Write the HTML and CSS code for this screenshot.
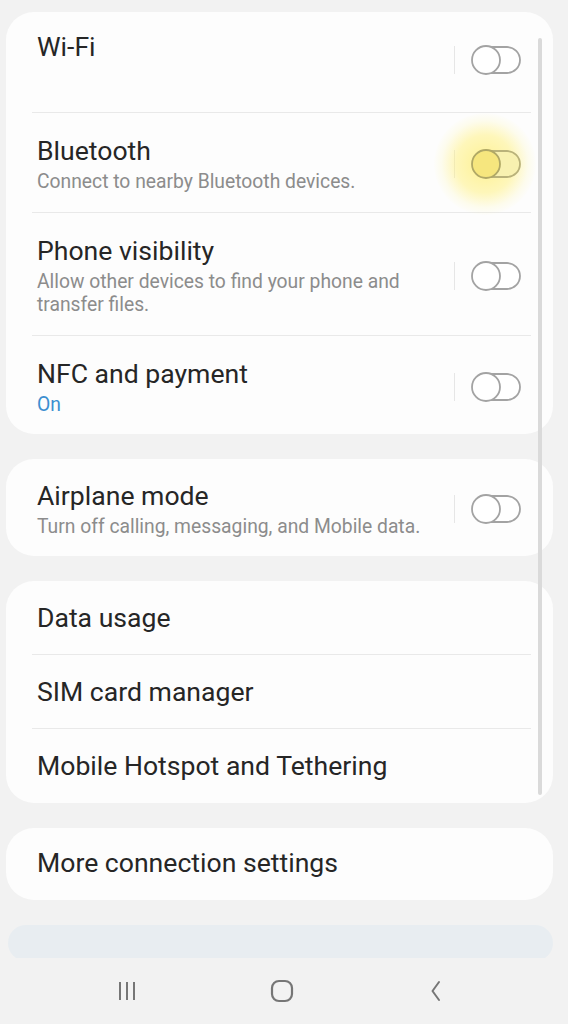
FILE: index.html
```html
<!DOCTYPE html>
<html lang="en">
<head>
    <meta charset="UTF-8">
    <meta name="viewport" content="width=device-width, initial-scale=1.0">
    <title>Connections</title>
    <link rel="stylesheet" href="styles.css">
</head>
<body>
    <div class="screen">
        <div class="list">
            <div class="card">
                <div class="row first">
                    <div class="text">
                        <div class="title">Wi-Fi</div>
                        <div class="sub"></div>
                    </div>
                    <div class="switch-wrap">
                        <span class="sep"></span>
                        <svg class="switch" width="52" height="32" viewBox="0 0 52 32"><rect x="3" y="3" width="47" height="26" rx="13" fill="#fff" stroke="#a3a3a3" stroke-width="1.8"/><circle cx="16" cy="16" r="14" fill="#fff" stroke="#a3a3a3" stroke-width="1.8"/></svg>
                    </div>
                </div>
                <div class="row">
                    <div class="text">
                        <div class="title">Bluetooth</div>
                        <div class="sub">Connect to nearby Bluetooth devices.</div>
                    </div>
                    <div class="switch-wrap">
                        <span class="touch"></span>
                        <span class="sep"></span>
                        <svg class="switch" width="52" height="32" viewBox="0 0 52 32"><rect x="3" y="3" width="47" height="26" rx="13" fill="#f8f1b0" stroke="#b9b27a" stroke-width="1.8"/><circle cx="16" cy="16" r="14" fill="#f6e67e" stroke="#b0a866" stroke-width="1.8"/></svg>
                    </div>
                </div>
                <div class="row">
                    <div class="text">
                        <div class="title">Phone visibility</div>
                        <div class="sub">Allow other devices to find your phone and transfer files.</div>
                    </div>
                    <div class="switch-wrap">
                        <span class="sep"></span>
                        <svg class="switch" width="52" height="32" viewBox="0 0 52 32"><rect x="3" y="3" width="47" height="26" rx="13" fill="#fff" stroke="#a3a3a3" stroke-width="1.8"/><circle cx="16" cy="16" r="14" fill="#fff" stroke="#a3a3a3" stroke-width="1.8"/></svg>
                    </div>
                </div>
                <div class="row end">
                    <div class="text">
                        <div class="title">NFC and payment</div>
                        <div class="sub on">On</div>
                    </div>
                    <div class="switch-wrap">
                        <span class="sep"></span>
                        <svg class="switch" width="52" height="32" viewBox="0 0 52 32"><rect x="3" y="3" width="47" height="26" rx="13" fill="#fff" stroke="#a3a3a3" stroke-width="1.8"/><circle cx="16" cy="16" r="14" fill="#fff" stroke="#a3a3a3" stroke-width="1.8"/></svg>
                    </div>
                </div>
            </div>

            <div class="card">
                <div class="row solo">
                    <div class="text">
                        <div class="title">Airplane mode</div>
                        <div class="sub">Turn off calling, messaging, and Mobile data.</div>
                    </div>
                    <div class="switch-wrap">
                        <span class="sep"></span>
                        <svg class="switch" width="52" height="32" viewBox="0 0 52 32"><rect x="3" y="3" width="47" height="26" rx="13" fill="#fff" stroke="#a3a3a3" stroke-width="1.8"/><circle cx="16" cy="16" r="14" fill="#fff" stroke="#a3a3a3" stroke-width="1.8"/></svg>
                    </div>
                </div>
            </div>

            <div class="card">
                <div class="row single"><div class="title">Data usage</div></div>
                <div class="row single"><div class="title">SIM card manager</div></div>
                <div class="row single"><div class="title">Mobile Hotspot and Tethering</div></div>
            </div>

            <div class="card">
                <div class="row single last"><div class="title">More connection settings</div></div>
            </div>

            <div class="card peek"></div>
        </div>

        <div class="navbar">
            <svg width="24" height="24" viewBox="0 0 24 24"><path d="M5 3v18M12 3v18M19 3v18" stroke="#767676" stroke-width="2" fill="none"/></svg>
            <svg width="26" height="26" viewBox="0 0 26 26"><rect x="3" y="3" width="20" height="20" rx="7" stroke="#767676" stroke-width="2.2" fill="none"/></svg>
            <svg width="24" height="24" viewBox="0 0 24 24"><path d="M15 3L8.5 12l6.5 9" stroke="#767676" stroke-width="2" fill="none" stroke-linecap="round" stroke-linejoin="round"/></svg>
        </div>

        <div class="scrollbar"></div>
    </div>
</body>
</html>
```

FILE: styles.css
```css
body{
    margin: 0;
    background: #f2f2f2;
    font-family: Roboto, "Noto Sans", sans-serif;
    color: #252525;
}
.screen{
    position: relative;
    height: 1024px;
    overflow: hidden;
}
.list{
    display: flex;
    flex-direction: column;
    gap: 25px;
    padding: 12px 15px 0 6px;
}
.card{
    background: #fdfdfd;
    border-radius: 28px;
}
.row{
    display: flex;
    align-items: center;
    margin: 0 22px 0 26px;
    padding: 22px 11px 19px 5px;
    border-top: 1px solid #e9e9e9;
}
.row:first-child{
    border-top: none;
}
.row.first{
    padding-top: 19px;
    padding-bottom: 23px;
}
.row.end{
    padding-bottom: 18px;
}
.row.solo{
    padding-top: 21px;
    padding-bottom: 18px;
}
.row.single{
    padding-top: 21px;
    padding-bottom: 20px;
}
.row.single:last-child{
    padding-bottom: 21px;
}
.row.last{
    padding-top: 19px;
    padding-bottom: 19px;
}
.text{
    flex: 1;
}
.title{
    font-size: 26.6px;
    line-height: 32px;
    color: #262626;
}
.sub{
    font-size: 19.3px;
    line-height: 23px;
    color: #8c8c8c;
    padding-top: 3px;
    padding-right: 30px;
    min-height: 23px;
}
.sub.on{
    color: #3b8fd0;
}
.switch-wrap{
    position: relative;
    display: flex;
    align-items: center;
    gap: 15px;
}
.sep{
    width: 1px;
    height: 28px;
    background: #e6e6e6;
}
.switch{
    display: block;
    position: relative;
    margin-right: -2px;
}
.touch{
    position: absolute;
    left: -20px;
    top: -35px;
    width: 102px;
    height: 102px;
    border-radius: 50%;
    background: radial-gradient(circle, rgba(255, 236, 100, 0.7) 0%, rgba(255, 240, 120, 0.5) 40%, rgba(255, 246, 170, 0.2) 60%, rgba(255, 248, 190, 0) 72%);
}
.card.peek{
    height: 36px;
    margin-left: 2px;
    background: #e8edf1;
    border-radius: 20px;
}
.navbar{
    position: absolute;
    left: 0;
    right: 0;
    bottom: 0;
    height: 66px;
    background: #f2f2f2;
    display: flex;
    align-items: center;
    justify-content: space-between;
    padding: 0 120px 0 115px;
}
.scrollbar{
    position: absolute;
    left: 538px;
    top: 38px;
    width: 4px;
    height: 757px;
    border-radius: 2px;
    background: #dadada;
}
```
